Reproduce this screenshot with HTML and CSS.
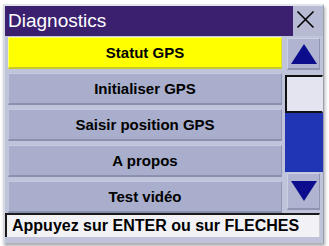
FILE: index.html
```html
<!DOCTYPE html>
<html>
<head>
<meta charset="utf-8">
<link rel="stylesheet" href="styles.css">
</head>
<body>
<div class="screen">
  <div class="titlebar">
    <div class="title">Diagnostics</div>
    <div class="close">
      <svg width="30" height="30" viewBox="0 0 30 30"><path d="M4.5 5.5 L20.5 21.5 M20.5 5.5 L4.5 21.5" stroke="#000" stroke-width="1.6" fill="none"/></svg>
    </div>
  </div>
  <div class="main">
    <div class="list">
      <div class="row selected">Statut GPS</div>
      <div class="row">Initialiser GPS</div>
      <div class="row">Saisir position GPS</div>
      <div class="row">A propos</div>
      <div class="row">Test vidéo</div>
    </div>
    <div class="scroll">
      <div class="btn up"><svg width="26" height="20" viewBox="0 0 26 20"><polygon points="13,0 26,20 0,20" fill="#0b0d8c"/></svg></div>
      <div class="thumb"></div>
      <div class="track"></div>
      <div class="btn down"><svg width="26" height="20" viewBox="0 0 26 20"><polygon points="0,0 26,0 13,20" fill="#0b0d8c"/></svg></div>
    </div>
  </div>
  <div class="status">Appuyez sur ENTER ou sur FLECHES</div>
</div>
</body>
</html>
```
FILE: styles.css
```css
html, body {
  margin: 0;
  padding: 0;
  background: #ffffff;
}
body {
  width: 329px;
  height: 246px;
  overflow: hidden;
  font-family: "Liberation Sans", Arial, sans-serif;
}
.screen {
  margin: 4px 0 0 3px;
  width: 321px;
  height: 239px;
  box-sizing: border-box;
  border-left: 2px solid #d6d8e2;
  border-top: 2px solid #e2e4ec;
  border-right: 1px solid #9c9eac;
  background: #c0c4da;
  box-shadow: 1px 3px 3px rgba(90, 90, 100, 0.5);
  display: flex;
  flex-direction: column;
}
.titlebar {
  display: flex;
  height: 30px;
}
.title {
  width: 288px;
  background: #3b2070;
  color: #ffffff;
  font-size: 19px;
  line-height: 30px;
  padding-left: 3px;
  box-sizing: border-box;
}
.close {
  flex: 1;
  background: #b6bad2;
  display: flex;
}
.close svg { display: block; margin-left: 0; }
.main {
  display: flex;
  margin-top: 1px;
  height: 176px;
}
.list {
  display: flex;
  flex-direction: column;
  gap: 4px;
  padding-left: 3px;
  width: 274px;
}
.row {
  height: 32px;
  box-sizing: border-box;
  background: #a8aecb;
  border-top: 1px solid #c6cae0;
  border-left: 1px solid #c0c4da;
  border-bottom: 2px solid #8a90ae;
  border-right: 1px solid #9298b4;
  font-size: 15px;
  font-weight: bold;
  color: #000;
  text-align: center;
  line-height: 29px;
}
.row.selected {
  background: #ffff00;
  border-top-color: #ffff80;
  border-left-color: #ffff80;
  border-bottom-color: #c8c830;
  border-right-color: #d8d840;
}
.scroll {
  margin-left: 3px;
  width: 38px;
  display: flex;
  flex-direction: column;
}
.btn {
  box-sizing: border-box;
  background: #b0b4d0;
  border-top: 1px solid #ccd0e4;
  border-left: 1px solid #ccd0e4;
  border-bottom: 2px solid #9094b0;
  border-right: 1px solid #9094b0;
  margin: 0 3px 0 2px;
  display: flex;
  justify-content: center;
  align-items: center;
}
.btn.up {
  margin-top: 1px;
  height: 32px;
}
.btn.down {
  margin-top: 1px;
  height: 37px;
}
.thumb {
  margin-top: 5px;
  height: 38px;
  box-sizing: border-box;
  background: #e4e4f0;
  border: 2px solid #111111;
  border-right: 1px solid #e4e4f0;
}
.track {
  height: 59px;
  background: #2035b4;
}
.status {
  margin-top: 0;
  height: 24px;
  width: 315px;
  box-sizing: border-box;
  background: #f2f2f6;
  border-top: 2px solid #1a1a1a;
  border-left: 2px solid #1a1a1a;
  border-right: 1px solid #d0d0d8;
  padding-left: 5px;
  font-size: 16px;
  font-weight: bold;
  line-height: 21px;
  color: #000;
  white-space: nowrap;
}
```
